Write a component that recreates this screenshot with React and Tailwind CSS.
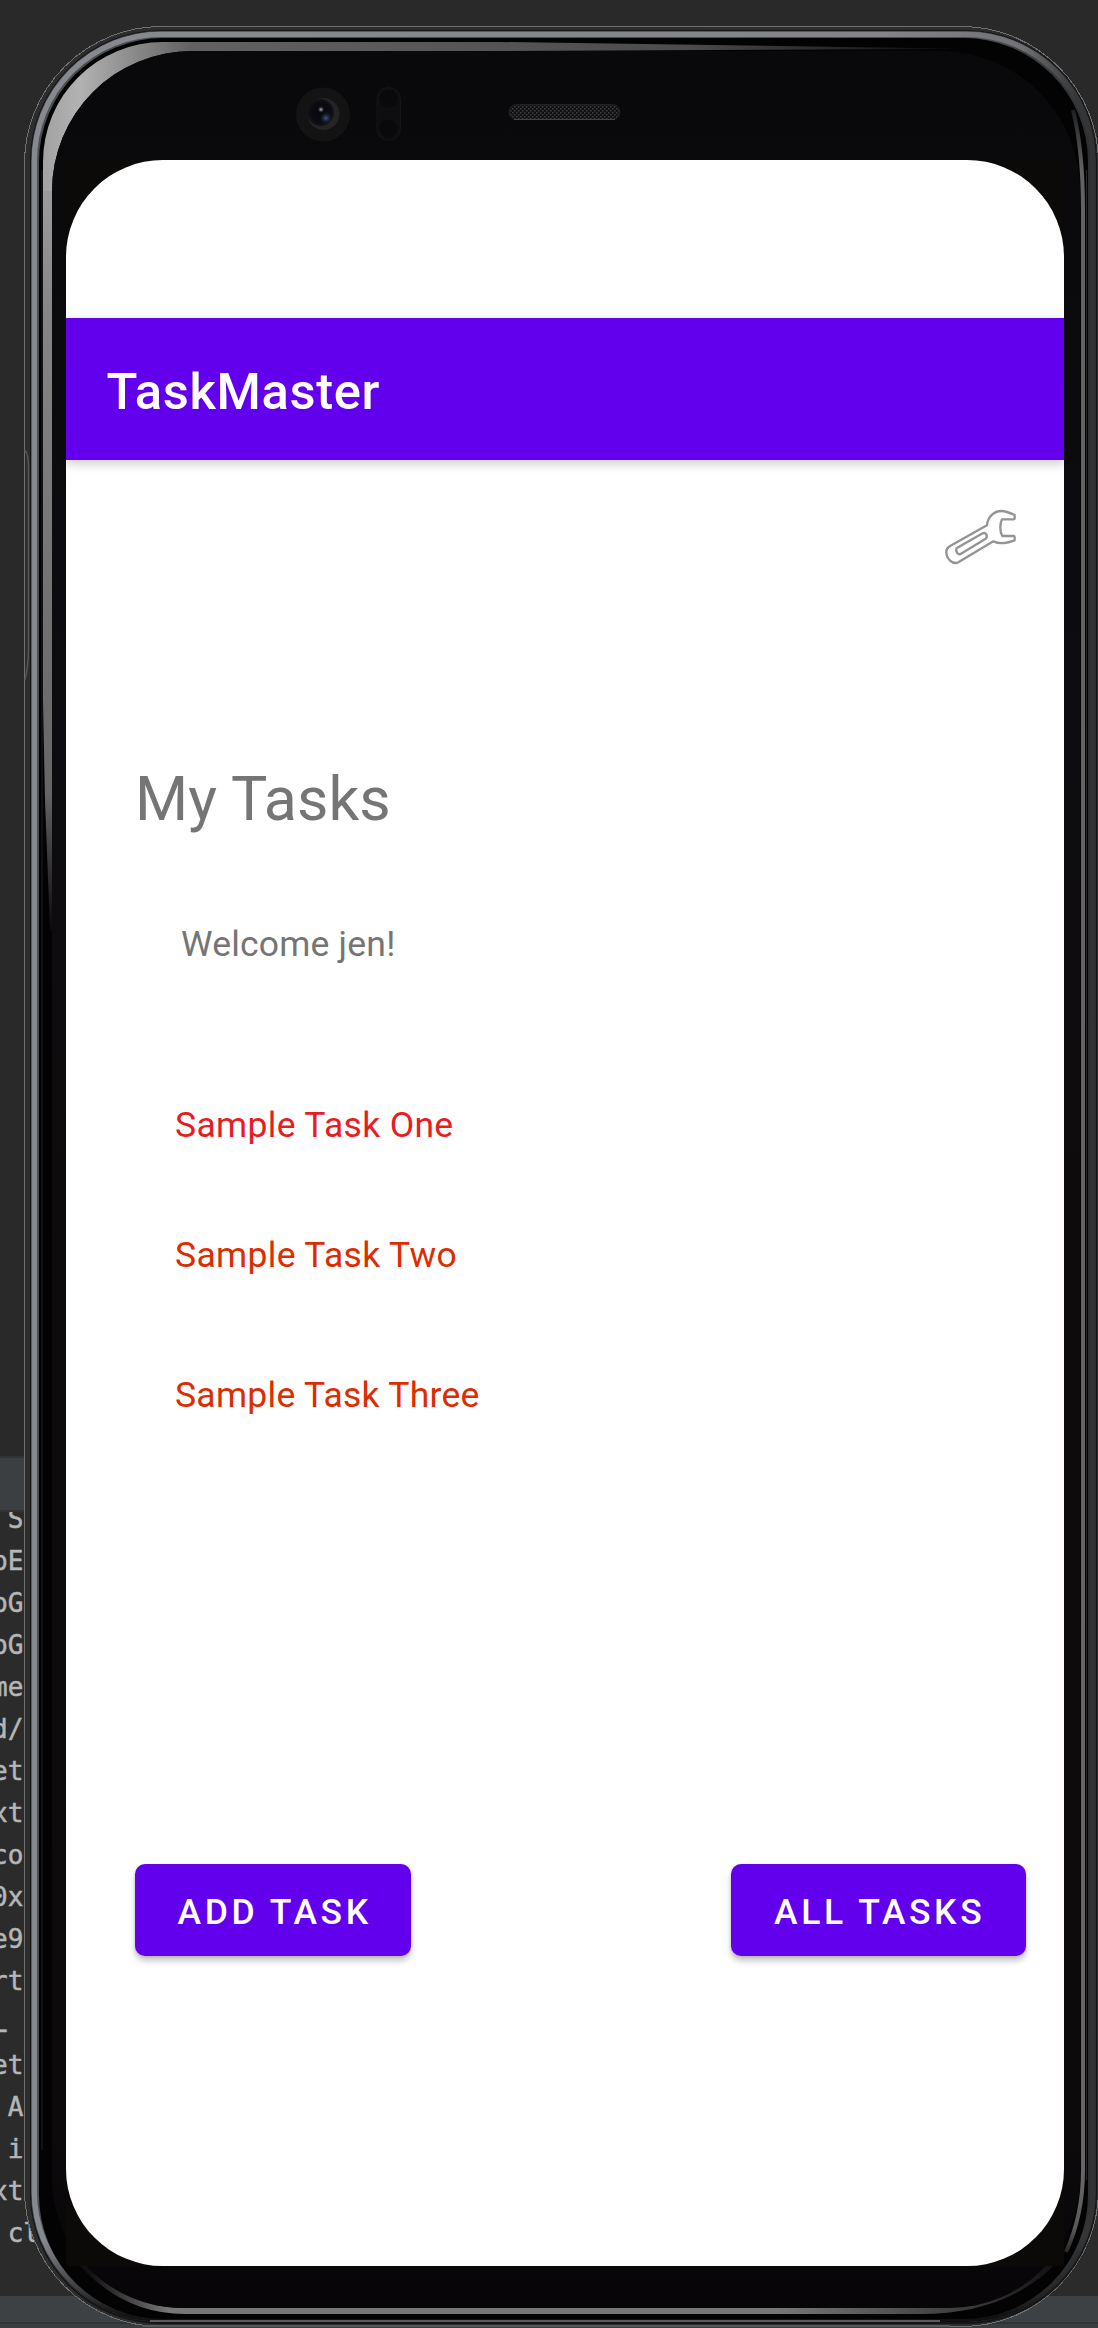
const codeLines = [' S', 'pE', 'pG', 'pG', 'me', 'd/', 'et', 'xt', 'co', '0x', 'e9', 'rt', 'L', 'et', ' A', ' i', 'xt', ' cl'];

function Editor() {
  return (
    <div className="flex h-full w-full flex-col bg-[#292929]">
      <div className="h-[1456px] shrink-0" />
      <div className="h-[56px] shrink-0 border-y-2 border-[#323232] bg-[#3c3f41]" />
      <div className="h-[784px] shrink-0 overflow-hidden bg-[#2b2b2b]">
        <div className="-mt-[14px] -ml-2 font-['DejaVu_Sans_Mono',monospace] text-[26px] leading-[42px] whitespace-pre text-[#b4b6b8] [-webkit-text-stroke:0.5px_#b4b6b8]">
          {codeLines.map((line, i) => (
            <div key={i} className="h-[42px]">{line}</div>
          ))}
        </div>
      </div>
      <div className="h-[28px] shrink-0 border-b-2 border-[#303234] bg-[#3d4143]" />
      <div className="grow bg-[#3a3d40]" />
    </div>
  );
}

function PhoneFrame() {
  return (
    <svg className="absolute inset-0" width="1098" height="2328" viewBox="0 0 1098 2328">
      <defs>
        <linearGradient id="silver" gradientUnits="userSpaceOnUse" x1="31" x2="1096" y1="0" y2="0">
          <stop offset="0" stopColor="#868a8f" />
          <stop offset="0.8" stopColor="#828488" />
          <stop offset="0.93" stopColor="#707276" />
          <stop offset="0.98" stopColor="#36383a" />
          <stop offset="1" stopColor="#303234" />
        </linearGradient>
        <linearGradient id="silverBase" gradientUnits="userSpaceOnUse" x1="31" x2="1096" y1="0" y2="0">
          <stop offset="0" stopColor="#4c4e51" />
          <stop offset="0.9" stopColor="#4a4c4e" />
          <stop offset="1" stopColor="#2b2d2f" />
        </linearGradient>
        <linearGradient id="silverLow" gradientUnits="userSpaceOnUse" x1="0" x2="0" y1="2240" y2="2316">
          <stop offset="0" stopColor="#060606" stopOpacity="0" />
          <stop offset="1" stopColor="#060606" stopOpacity="0.9" />
        </linearGradient>
        <linearGradient id="glassTop" gradientUnits="userSpaceOnUse" x1="43" x2="960" y1="0" y2="0">
          <stop offset="0" stopColor="#a2a2a2" />
          <stop offset="0.04" stopColor="#b2b2b2" />
          <stop offset="0.09" stopColor="#909090" />
          <stop offset="0.16" stopColor="#626262" />
          <stop offset="0.7" stopColor="#4c4c4c" />
          <stop offset="1" stopColor="#080809" />
        </linearGradient>
        <linearGradient id="glassLeft" gradientUnits="userSpaceOnUse" x1="0" x2="0" y1="160" y2="930">
          <stop offset="0" stopColor="#a2a2a2" />
          <stop offset="0.2" stopColor="#858585" />
          <stop offset="0.82" stopColor="#666" />
          <stop offset="1" stopColor="#0a0a0a" />
        </linearGradient>
        <linearGradient id="glassRight" gradientUnits="userSpaceOnUse" x1="0" x2="0" y1="105" y2="2260">
          <stop offset="0" stopColor="#1a1a1a" />
          <stop offset="0.03" stopColor="#626262" />
          <stop offset="0.96" stopColor="#666" />
          <stop offset="0.985" stopColor="#5a5a5a" />
          <stop offset="1" stopColor="#161616" />
        </linearGradient>
        <linearGradient id="glassBottom" gradientUnits="userSpaceOnUse" x1="90" x2="1070" y1="0" y2="0">
          <stop offset="0" stopColor="#111" />
          <stop offset="0.08" stopColor="#777" />
          <stop offset="0.7" stopColor="#777" />
          <stop offset="0.9" stopColor="#3a3a3a" />
          <stop offset="1" stopColor="#0a0a0a" />
        </linearGradient>
        <linearGradient id="body" x1="0" x2="0" y1="0" y2="1">
          <stop offset="0" stopColor="#09090b" />
          <stop offset="0.25" stopColor="#0c0c10" />
          <stop offset="0.5" stopColor="#0e0b0c" />
          <stop offset="0.92" stopColor="#0d0a0c" />
          <stop offset="1" stopColor="#070508" />
        </linearGradient>
        <radialGradient id="lens" cx="0.5" cy="0.5" r="0.5">
          <stop offset="0" stopColor="#06070b" />
          <stop offset="0.75" stopColor="#0b0c12" />
          <stop offset="1" stopColor="#151517" />
        </radialGradient>
        <radialGradient id="blueGlow">
          <stop offset="0" stopColor="#48578c" />
          <stop offset="1" stopColor="#141829" stopOpacity="0" />
        </radialGradient>
        <radialGradient id="glint">
          <stop offset="0" stopColor="#bbb" />
          <stop offset="1" stopColor="#333" stopOpacity="0" />
        </radialGradient>
        <pattern id="mesh" width="4" height="4" patternUnits="userSpaceOnUse">
          <rect width="4" height="4" fill="#121212" />
          <rect width="1.5" height="1.5" fill="#3c3c3c" />
          <rect x="2" y="2" width="1.5" height="1.5" fill="#3c3c3c" />
        </pattern>
      </defs>

      <rect x="24.5" y="26.5" width="1074" height="2300" rx="137" fill="#2d2d2d" />
      <rect x="24.5" y="26.5" width="1074" height="2300" rx="137" fill="none" stroke="#707070" shapeRendering="crispEdges" />
      <path d="M143 2326H950" stroke="#585858" strokeWidth="2" />

      <rect x="30" y="30" width="1067" height="2294" rx="131" fill="#151515" />
      <rect x="31" y="31" width="1065" height="2291" rx="130" fill="url(#silverBase)" />
      <rect x="34.500" y="34.500" width="1058" height="2284" rx="126.500" fill="none" stroke="url(#silver)" strokeWidth="5" />
      <rect x="32.500" y="32.500" width="1062" height="2288" rx="128.500" fill="none" stroke="url(#silver)" strokeWidth="1.500" />
      <rect x="31" y="31" width="1065" height="2291" rx="130" fill="url(#silverLow)" />
      <path d="M150 2321H940" stroke="#777" strokeWidth="1.500" />
      <rect x="39" y="38" width="1049" height="2281" rx="124" fill="#030303" />
      <path d="M42 2150V170" stroke="#202020" strokeWidth="1" />

      <path d="M43 162H52V930H50L45 800L43 700Z" fill="url(#glassLeft)" />
      <path d="M43 162A120 120 0 0 1 163 42H500L950 48.500V49L500 51H192A140 140 0 0 0 52 191H43Z" fill="url(#glassTop)" />
      <path d="M75 2255Q120 2311 185 2311H920Q1010 2311 1060 2255" fill="none" stroke="url(#glassBottom)" strokeWidth="6" />
      <path d="M1073 110Q1083 150 1083 210V2170Q1083 2215 1066 2252" fill="none" stroke="url(#glassRight)" strokeWidth="4" />
      <path d="M1086.500 170V2180" stroke="#292929" strokeWidth="1" />
      <path d="M52 191A140 140 0 0 1 192 51H940A140 140 0 0 1 1080 191V2178A130 130 0 0 1 950 2308H182A130 130 0 0 1 52 2178Z" fill="url(#body)" />

      <path d="M24.500 450Q28.500 452 28.500 470V650Q28 668 25 680" fill="none" stroke="#525854" strokeWidth="1.500" />
      <path d="M66 160H1064V2266H66Z" fill="#0b0a08" />

      <circle cx="323" cy="114.500" r="27" fill="#131314" />
      <circle cx="323.500" cy="114" r="16" fill="#242426" />
      <circle cx="320.500" cy="112.500" r="13.500" fill="url(#lens)" />
      <circle cx="326" cy="118" r="6.500" fill="url(#blueGlow)" />
      <circle cx="321" cy="109.500" r="3.500" fill="url(#glint)" />
      <rect x="377" y="87.500" width="23.500" height="53" rx="11.750" fill="#0e0e10" stroke="#151517" />
      <circle cx="388.500" cy="98.500" r="9" fill="#09090b" />
      <circle cx="388.500" cy="128.500" r="9" fill="#09090b" />
      <rect x="509" y="104.500" width="111" height="15" rx="7.500" fill="url(#mesh)" stroke="#202020" />
      <path d="M514 119.500H615" stroke="#444" strokeWidth="1" />
    </svg>
  );
}

function Wrench() {
  return (
    <svg className="h-[58px] w-[75px]" viewBox="130 205 225 174" fill="none" stroke="#949494" strokeWidth="7" strokeLinejoin="round">
      <path d="M262 257C264 231 284 214 305 214C318 214 332 220 345 226V236Q345 239 341 239H307C300 253 300 275 308 289H342Q345 289 345 293V302C327 308 305 316 281 305L176 368C158 376 140 357 140 336Q140 326 150 320Z" />
      <path d="M173 324L249 281Q256 278 260 284Q264 291 258 297L184 342Q178 346 173 340Q166 329 173 324Z" />
    </svg>
  );
}

function RaisedButton({ className, children }) {
  return (
    <button className={`h-[92px] rounded-[10px] bg-[#6200ee] pt-[3px] pl-[43px] text-left text-[35.500px] leading-[42px] font-medium tracking-[3.600px] whitespace-nowrap text-white shadow-[0_5px_6px_rgba(0,0,0,0.22),0_1px_3px_rgba(0,0,0,0.12)] ${className}`}>
      {children}
    </button>
  );
}

export default function App() {
  return (
    <div className="relative h-[2328px] w-[1098px] overflow-hidden font-[Roboto,sans-serif]">
      <div className="absolute inset-0"><Editor /></div>
      <PhoneFrame />
      <div className="relative pt-[160px] pl-[66px]">
        <main className="flex h-[2106px] w-[998px] flex-col overflow-hidden rounded-[97px] bg-white pt-[158px] text-[35.500px] leading-[42px] text-[#757575]">
          <header className="flex h-[142px] shrink-0 items-center bg-[#6200ee] pt-[5px] pl-[40.500px] shadow-[0_4px_10px_rgba(0,0,0,0.2)]">
            <h1 className="text-[50.700px] leading-[60px] font-medium tracking-[0.650px] text-white">TaskMaster</h1>
          </header>
          <div className="mt-[48px] mr-[46px] flex justify-end"><Wrench /></div>
          <h2 className="mt-[198px] pl-[69px] text-[60.900px] leading-[72px]">My Tasks</h2>
          <p className="mt-[87px] pl-[115px] tracking-[0.200px]">Welcome jen!</p>
          <p className="mt-[139px] pl-[109px] tracking-[0.330px] text-[#e91c1f]">Sample Task One</p>
          <p className="mt-[88px] pl-[109px] tracking-[0.330px] text-[#dd2c00]">Sample Task Two</p>
          <p className="mt-[98px] pl-[109px] tracking-[0.270px] text-[#dd2c00]">Sample Task Three</p>
          <div className="mt-[448px] flex justify-between pr-[38px] pl-[68.500px]">
            <RaisedButton className="w-[276px]">ADD TASK</RaisedButton>
            <RaisedButton className="w-[295px]">ALL TASKS</RaisedButton>
          </div>
        </main>
      </div>
    </div>
  );
}
